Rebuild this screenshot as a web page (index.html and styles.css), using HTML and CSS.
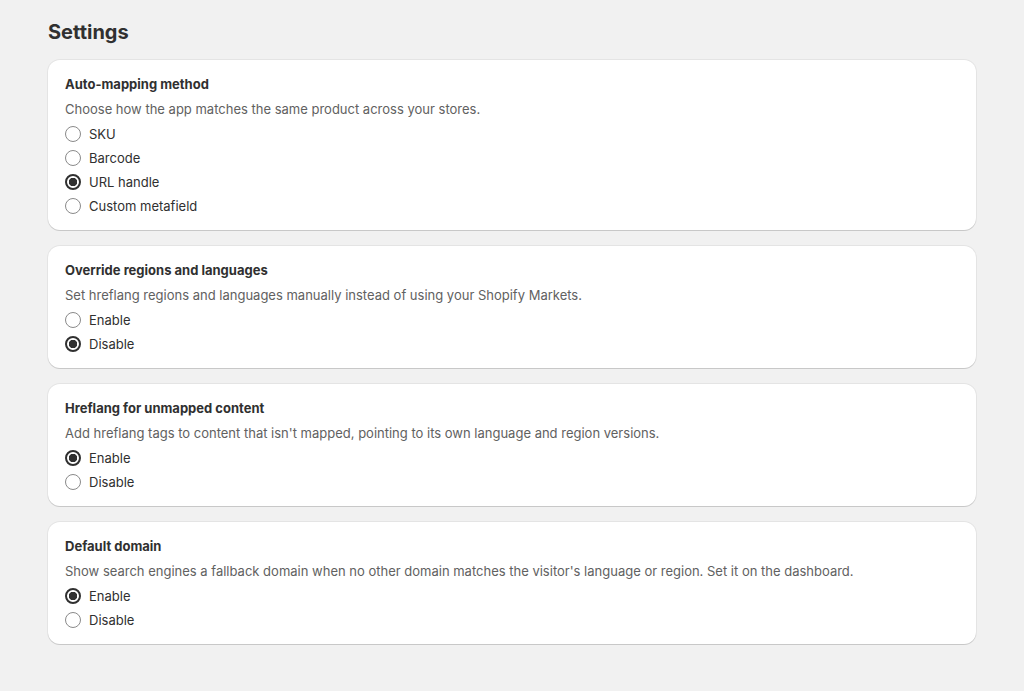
FILE: index.html
```html
<!DOCTYPE html>
<html>
    <head>
        <meta charset="utf-8">
        <title>Settings</title>
        <link rel="stylesheet" href="styles.css">
    </head>

    <body>
        <div id="page">
            <h1 id="page_title">Settings</h1>

            <div class="card">
                <h2 class="card_title">Auto-mapping method</h2>
                <p class="card_desc">Choose how the app matches the same product across your stores.</p>
                <ul class="choices">
                    <li><span class="radio"></span>SKU</li>
                    <li><span class="radio"></span>Barcode</li>
                    <li><span class="radio checked"></span>URL handle</li>
                    <li><span class="radio"></span>Custom metafield</li>
                </ul>
            </div>

            <div class="card">
                <h2 class="card_title">Override regions and languages</h2>
                <p class="card_desc">Set hreflang regions and languages manually instead of using your Shopify Markets.</p>
                <ul class="choices">
                    <li><span class="radio"></span>Enable</li>
                    <li><span class="radio checked"></span>Disable</li>
                </ul>
            </div>

            <div class="card">
                <h2 class="card_title">Hreflang for unmapped content</h2>
                <p class="card_desc">Add hreflang tags to content that isn't mapped, pointing to its own language and region versions.</p>
                <ul class="choices">
                    <li><span class="radio checked"></span>Enable</li>
                    <li><span class="radio"></span>Disable</li>
                </ul>
            </div>

            <div class="card">
                <h2 class="card_title">Default domain</h2>
                <p class="card_desc">Show search engines a fallback domain when no other domain matches the visitor's language or region. Set it on the dashboard.</p>
                <ul class="choices">
                    <li><span class="radio checked"></span>Enable</li>
                    <li><span class="radio"></span>Disable</li>
                </ul>
            </div>
        </div>
    </body>
</html>
```

FILE: styles.css
```css
body {
    margin : 0;
    background-color : #f1f1f1;
    color : #303030;
    font-family : Inter, "Noto Sans", sans-serif;
    font-size : 13px;
}

div#page {
    padding : 20px 48px;
}

h1#page_title {
    margin : 0 0 16px;
    font-size : 20px;
    line-height : 24px;
    font-weight : 700;
    color : #303030;
}

div.card {
    background-color : white;
    border-radius : 12px;
    padding : 12px 16px 12px 17px;
    margin-bottom : 16px;
    box-shadow : 0 0 0 1px rgba(0, 0, 0, 0.05), 0 1px 0 rgba(0, 0, 0, 0.12);
}

h2.card_title {
    margin : 0 0 1px;
    font-size : 13px;
    line-height : 24px;
    font-weight : 650;
}

p.card_desc {
    margin : 0 0 1px;
    line-height : 24px;
    color : #616161;
}

ul.choices {
    list-style : none;
    margin : 0;
    padding : 0;
}

ul.choices li {
    display : flex;
    align-items : center;
    gap : 8px;
    height : 24px;
    color : #303030;
}

span.radio {
    box-sizing : border-box;
    width : 16px;
    height : 16px;
    border : 1px solid #8a8a8a;
    border-radius : 50%;
    background-color : white;
}

span.radio.checked {
    border : 2px solid #303030;
    background : radial-gradient(circle, #303030 0 4px, white 4.5px);
}
```
